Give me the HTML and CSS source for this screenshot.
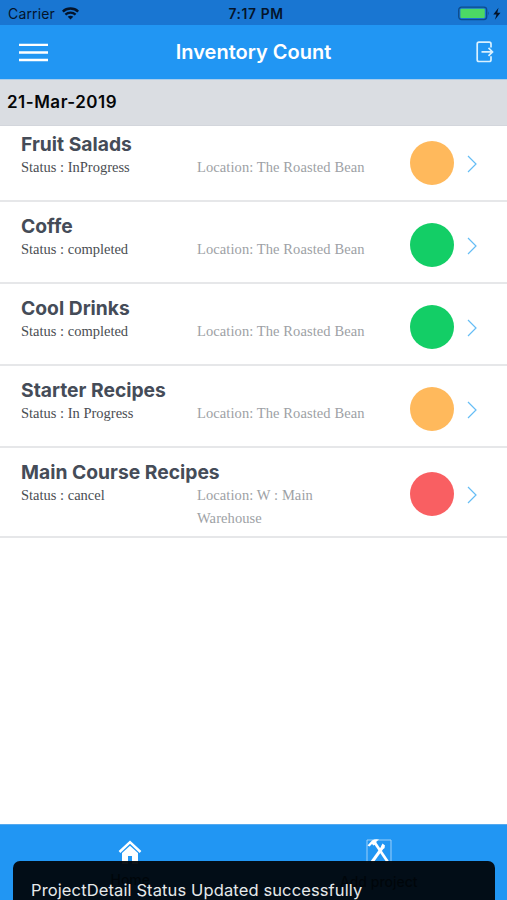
FILE: index.html
```html
<!DOCTYPE html>
<html lang="en">
<head>
<meta charset="utf-8">
<title>Inventory Count</title>
<link rel="stylesheet" href="styles.css">
</head>
<body>
<div class="app">
  <div class="status-bar">
    <div class="carrier"><span>Carrier</span>
      <svg width="17" height="13" viewBox="0 0 17 13" fill="none" stroke="#04142b"><path d="M.8 4.600C5 .6 12 .6 16.200 4.600" stroke-width="2.500"/><path d="M3.400 7.700C6.300 5 10.700 5 13.600 7.700" stroke-width="2.300"/><path d="M8.500 12.600 5.700 9.800C7.300 8.300 9.700 8.300 11.300 9.800Z" fill="#04142b" stroke="none"/></svg>
    </div>
    <div class="clock">7:17 PM</div>
    <div class="power">
      <svg width="43" height="16" viewBox="0 0 43 16"><rect x=".7" y="1.200" width="28" height="12.400" rx="2.800" fill="none" stroke="#0e4c8c" stroke-width="1.300"/><rect x="2.400" y="2.800" width="24.400" height="9.200" rx="1" fill="#4cd964"/><path d="M30.200 5.300q1.600 2.100 0 4.200z" fill="#0e4c8c"/><path d="M40.500 1.800 35.300 8.500h3.200l-1.600 5.300L42.500 6.800h-3.200z" fill="#04142b"/></svg>
    </div>
  </div>
  <header class="navbar">
    <svg class="menu" width="29" height="19" viewBox="0 0 29 19" stroke="#fff" stroke-width="2.300"><path d="M0 1.900h29M0 9.500h29M0 17h29"/></svg>
    <h1>Inventory Count</h1>
    <svg class="logout" width="18" height="22" viewBox="0 0 18 22" fill="none" stroke="#d9f1ff" stroke-width="1.700"><path d="M15 6.500V3Q15 1.200 13.200 1.200H3Q1.200 1.200 1.200 3V18.700Q1.200 20.500 3 20.500H13.200Q15 20.500 15 18.700V15.300M5.500 10.900H16.300M12.500 6.900l4 4-4 4"/></svg>
  </header>
  <div class="date">21-Mar-2019</div>
  <main class="list">
    <div class="row first">
      <div class="info"><h2>Fruit Salads</h2><div class="meta"><span class="state">Status : InProgress</span><span class="place">Location: The Roasted Bean</span></div></div>
      <i class="dot orange"></i><svg class="chevron" width="11" height="18" viewBox="0 0 11 18"><path d="M1 1 9 9 1 17"/></svg>
    </div>
    <div class="row">
      <div class="info"><h2>Coffe</h2><div class="meta"><span class="state">Status : completed</span><span class="place">Location: The Roasted Bean</span></div></div>
      <i class="dot green"></i><svg class="chevron" width="11" height="18" viewBox="0 0 11 18"><path d="M1 1 9 9 1 17"/></svg>
    </div>
    <div class="row">
      <div class="info"><h2>Cool Drinks</h2><div class="meta"><span class="state">Status : completed</span><span class="place">Location: The Roasted Bean</span></div></div>
      <i class="dot green"></i><svg class="chevron" width="11" height="18" viewBox="0 0 11 18"><path d="M1 1 9 9 1 17"/></svg>
    </div>
    <div class="row">
      <div class="info"><h2>Starter Recipes</h2><div class="meta"><span class="state">Status : In Progress</span><span class="place">Location: The Roasted Bean</span></div></div>
      <i class="dot orange"></i><svg class="chevron" width="11" height="18" viewBox="0 0 11 18"><path d="M1 1 9 9 1 17"/></svg>
    </div>
    <div class="row last">
      <div class="info"><h2>Main Course Recipes</h2><div class="meta"><span class="state">Status : cancel</span><span class="place">Location: W : Main Warehouse</span></div></div>
      <i class="dot red"></i><svg class="chevron" width="11" height="18" viewBox="0 0 11 18"><path d="M1 1 9 9 1 17"/></svg>
    </div>
  </main>
  <footer class="tabs">
    <div class="tab home">
      <svg width="24" height="24" viewBox="0 0 24 24"><path d="M1.500 12 12 2.200 22.500 12" fill="none" stroke="#fff" stroke-width="2.500"/><path d="M12 5.800 20 13V24H14V16H10V24H4V13Z" fill="#fff"/></svg>
      <span>Home</span>
    </div>
    <div class="tab add">
      <svg width="26" height="26" viewBox="0 0 26 26" fill="none" stroke="#fff"><path d="M1 25V2H25V25" stroke="#a9d6fb" stroke-width=".9"/><path d="M9 5 21.500 23.500" stroke-width="2.700"/><path d="M17.500 8 6 24" stroke-width="3"/><path d="M1.500 7.500 6 2.500Q9 .5 13 1.500L10.500 3.500 10 6 7.500 7.500 6 6 3.500 8.500Z" fill="#fff" stroke="none"/><path d="M15 8.500 16.500 5.500 19 7.500 18 11Z" fill="#fff" stroke="none"/></svg>
      <span>Add project</span>
    </div>
  </footer>
  <div class="toast">ProjectDetail Status Updated successfully</div>
</div>
</body>
</html>
```
FILE: styles.css
```css
* { box-sizing: border-box; }
body { margin: 0; font-family: Inter, "Liberation Sans", sans-serif; background: #fff; }
h1, h2 { margin: 0; }
svg { display: block; flex: none; }
.app { position: relative; width: 507px; height: 900px; overflow: hidden; display: flex; flex-direction: column; }
.status-bar { height: 25px; flex: none; background: #1976d2; color: #04142b; display: grid; grid-template-columns: 1fr auto 1fr; align-items: center; padding: 2px 6px 0 8px; font-size: 14px; }
.carrier { display: flex; align-items: center; gap: 7px; letter-spacing: .15px; }
.clock { font-weight: 600; font-size: 13.800px; margin-left: 3px; letter-spacing: .6px; }
.power { justify-self: end; }
.navbar { height: 54px; flex: none; background: #2196f3; color: #fff; display: grid; grid-template-columns: 1fr auto 1fr; align-items: center; padding: 0 13px 0 19px; }
.navbar h1 { font-size: 20px; font-weight: 600; line-height: 24px; margin-left: -6px; }
.logout { justify-self: end; }
.date { height: 47px; flex: none; background: #dadde2; border-top: 1px solid #a9cdec; border-bottom: 1px solid #d3d6dc; padding-left: 7px; line-height: 45px; font-size: 17px; letter-spacing: .5px; font-weight: 600; color: #050608; }
.list { flex: 1; }
.row { height: 82px; border-bottom: 2px solid #e6e7e9; padding: 12px 29px 0 21px; display: flex; }
.row.first { height: 76px; padding-top: 6px; }
.row.last { height: 90px; }
.info { width: 389px; flex: none; }
.info h2 { font-size: 19.300px; line-height: 24px; height: 24px; font-weight: 650; color: #454c58; white-space: nowrap; }
.meta { display: flex; font-family: "Liberation Serif", serif; font-size: 14.500px; line-height: 23px; color: #4a4d52; }
.state { width: 176px; flex: none; }
.place { width: 172px; letter-spacing: .09px; color: #9da1a5; }
.dot { width: 44px; height: 44px; border-radius: 50%; margin-top: 9px; flex: none; }
.last .dot { margin-top: 12px; }
.orange { background: #ffb95c; }
.green { background: #13ce66; }
.red { background: #f95f62; }
.chevron { margin: 23px 0 0 13px; fill: none; stroke: #65bdf5; stroke-width: 1.200; }
.last .chevron { margin-top: 26px; }
.tabs { height: 76px; flex: none; background: #2196f3; display: flex; border-top: 1px solid #55a9ee; }
.tab { flex: 1; display: flex; flex-direction: column; align-items: center; padding-top: 13px; font-size: 14px; }
.home { padding: 15px 0 0 6px; }
.add { padding-right: 4px; }
.tab span { margin-top: 9px; font-weight: 500; line-height: 17px; color: #0d1d26; }
.home span { margin-top: 7px; }
.toast { position: absolute; left: 13px; top: 861px; width: 482px; height: 48px; border-radius: 7px; background: rgba(0, 4, 8, .94); color: #e6e9eb; padding: 17px 18px; font-size: 16.500px; letter-spacing: .12px; line-height: 24px; white-space: nowrap; }
```
